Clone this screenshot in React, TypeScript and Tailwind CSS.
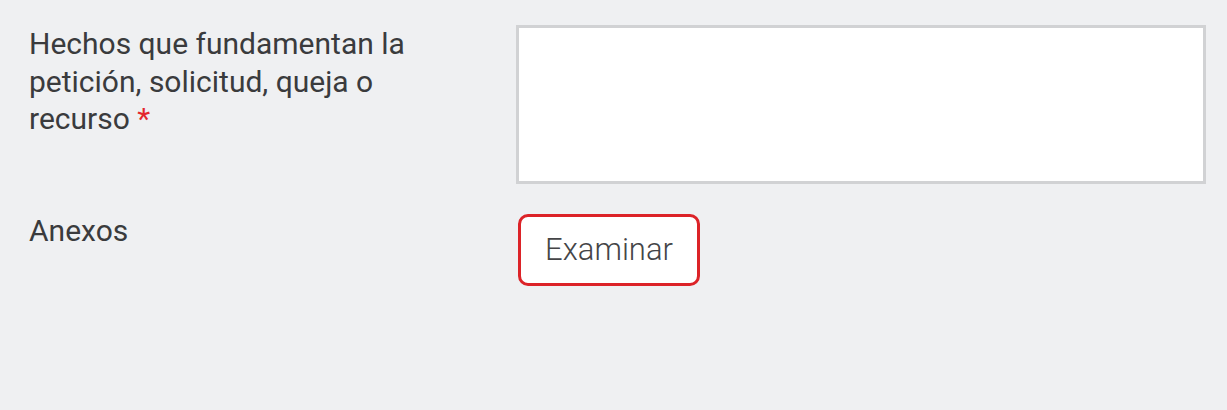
export default function App() {
  return (
    <div className="min-h-[410px] w-full bg-[#eff0f2] font-['Roboto',sans-serif] text-[#3a3b3d]">
      <div className="flex flex-col gap-[28px] pl-[29px] pr-[21px] pt-[25px]">
        <div className="flex">
          <div className="w-[487px] shrink-0">
            <label className="block w-[420px] text-[30px] leading-[37.5px]">
              Hechos que fundamentan la petición, solicitud, queja o recurso{' '}
              <span className="text-[#e3262d]">*</span>
            </label>
          </div>
          <textarea className="h-[159px] flex-1 resize-none border-[3px] border-[#d1d2d4] bg-white outline-none" />
        </div>
        <div className="flex">
          <span className="w-[489px] shrink-0 text-[30px] leading-[37.5px]">Anexos</span>
          <button className="mt-[2px] h-[72px] w-[182px] rounded-[10px] border-[3px] border-[#dc2328] bg-white text-[31px] font-light text-[#444547]">
            Examinar
          </button>
        </div>
      </div>
    </div>
  );
}
